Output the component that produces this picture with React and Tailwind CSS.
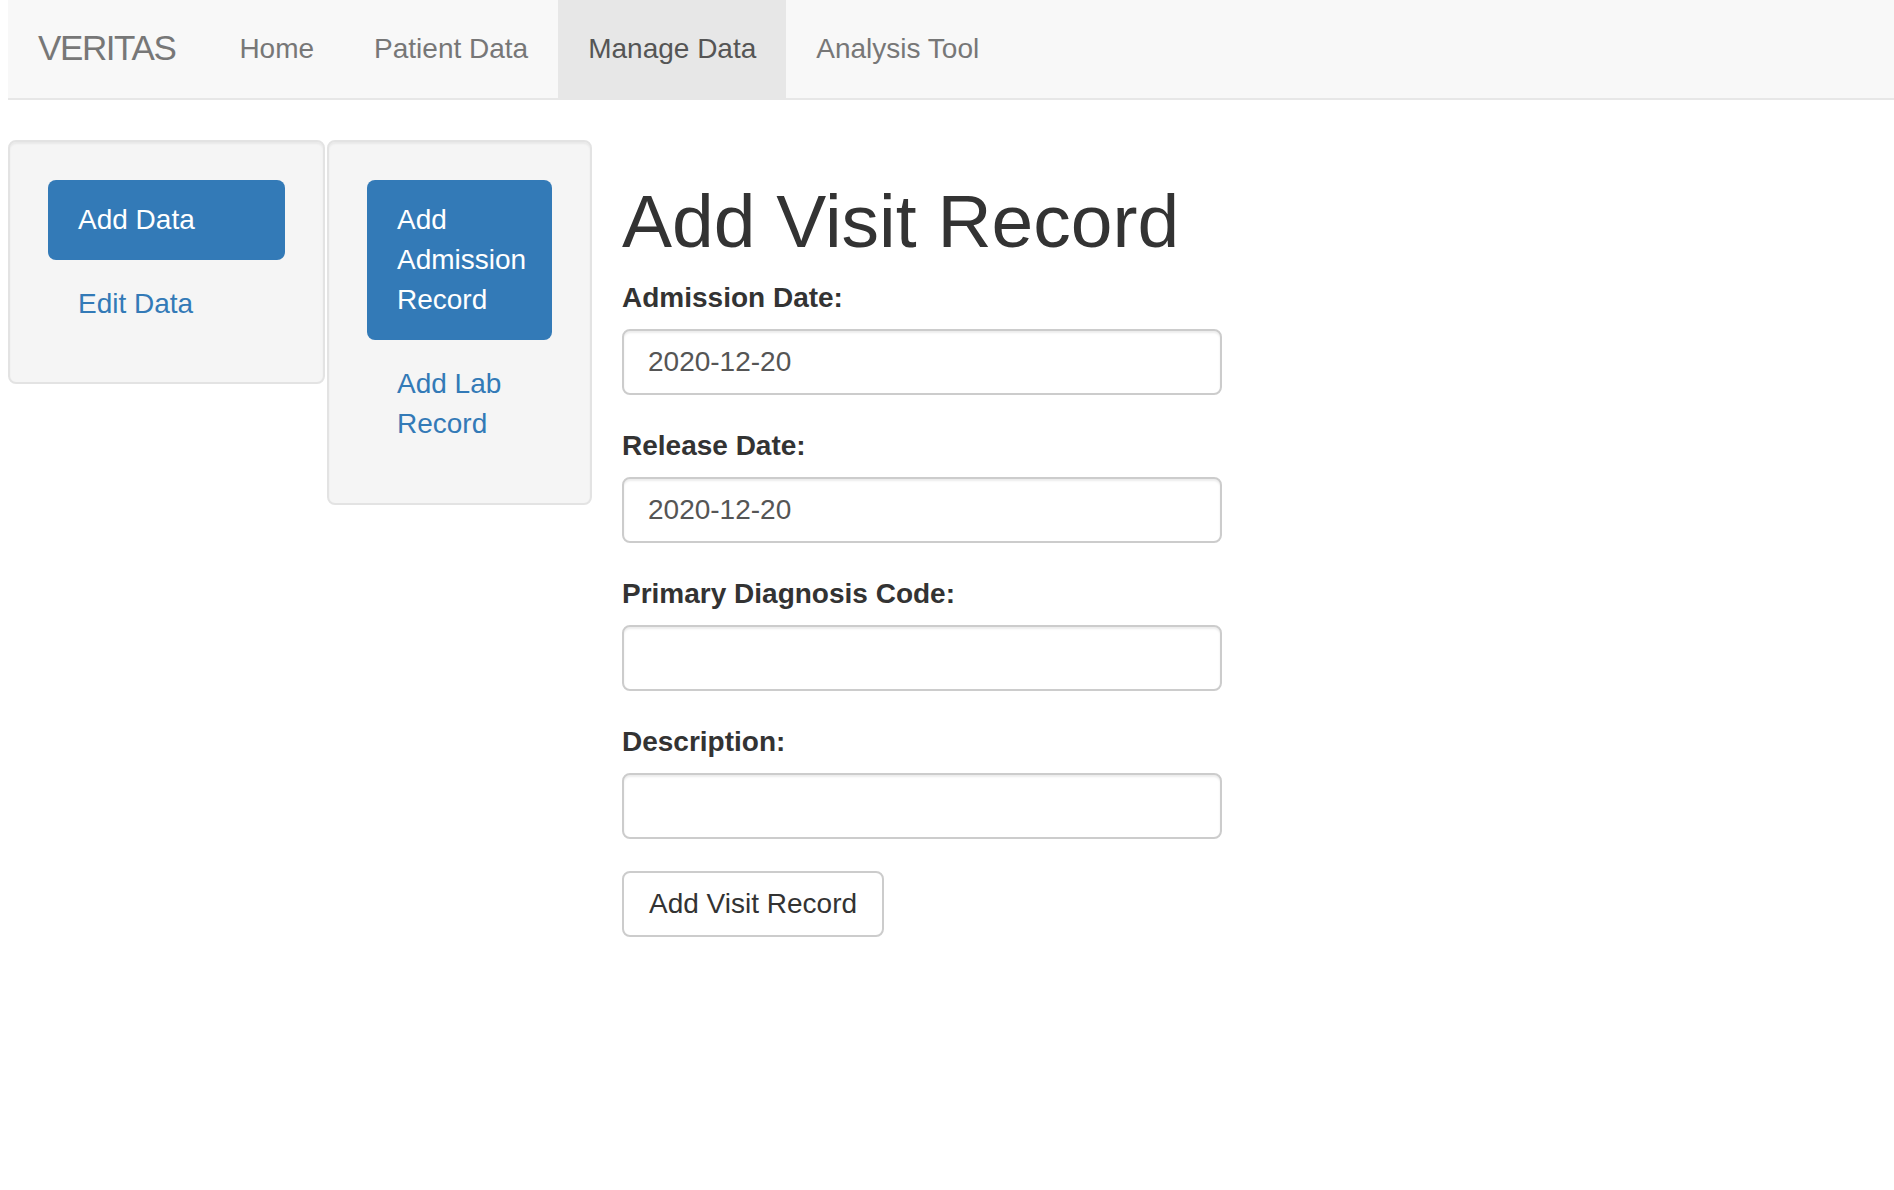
import React from "react";

const navLinks = [
  { label: "Home", active: false },
  { label: "Patient Data", active: false },
  { label: "Manage Data", active: true },
  { label: "Analysis Tool", active: false },
];

function Field({ label, value }) {
  return (
    <div className="mb-[31px]">
      <label className="mb-[11px] block text-[28px] font-bold leading-[40px] text-[#333]">{label}</label>
      <input
        type="text"
        defaultValue={value}
        className="block h-[66px] w-[600px] rounded-[8px] border-2 border-[#ccc] bg-white px-[24px] text-[28px] text-[#555] shadow-[inset_0_2px_2px_rgba(0,0,0,0.075)] outline-none"
      />
    </div>
  );
}

export default function App() {
  return (
    <div className="min-h-screen bg-white pl-[8px] font-['Liberation_Sans',Arial,sans-serif]">
      <nav className="flex h-[100px] border-b-2 border-[#e7e7e7] bg-[#f8f8f8]">
        <a className="block pl-[30px] pr-[34px] pt-[28px] text-[35px] leading-[40px] tracking-[-1.4px] text-[#777]">
          VERITAS
        </a>
        {navLinks.map((l) => (
          <a
            key={l.label}
            className={
              l.active
                ? "block bg-[#e7e7e7] px-[30px] pt-[29px] text-[28px] leading-[40px] text-[#555]"
                : "block px-[30px] pt-[29px] text-[28px] leading-[40px] text-[#777]"
            }
          >
            {l.label}
          </a>
        ))}
      </nav>

      <div className="mt-[40px] flex items-start">
        <div className="w-[317px] rounded-[8px] border-2 border-[#e3e3e3] bg-[#f5f5f5] px-[38px] pb-[38px] pt-[38px] shadow-[inset_0_2px_2px_rgba(0,0,0,0.05)]">
          <div className="flex flex-col gap-[4px]">
            <a className="block rounded-[8px] bg-[#337ab7] px-[30px] py-[20px] text-[28px] leading-[40px] text-white">
              Add Data
            </a>
            <a className="block rounded-[8px] px-[30px] py-[20px] text-[28px] leading-[40px] text-[#337ab7]">
              Edit Data
            </a>
          </div>
        </div>

        <div className="ml-[2px] w-[265px] rounded-[8px] border-2 border-[#e3e3e3] bg-[#f5f5f5] px-[38px] pb-[39px] pt-[38px] shadow-[inset_0_2px_2px_rgba(0,0,0,0.05)]">
          <div className="flex flex-col gap-[4px]">
            <a className="block rounded-[8px] bg-[#337ab7] px-[30px] py-[20px] text-[28px] leading-[40px] text-white">
              Add Admission Record
            </a>
            <a className="block rounded-[8px] px-[30px] py-[20px] text-[28px] leading-[40px] text-[#337ab7]">
              Add Lab Record
            </a>
          </div>
        </div>

        <div className="ml-[30px] w-[600px]">
          <h1 className="mb-[17px] mt-[41px] text-[75px] font-medium leading-[80px] text-[#333]">Add Visit Record</h1>
          <Field label="Admission Date:" value="2020-12-20" />
          <Field label="Release Date:" value="2020-12-20" />
          <Field label="Primary Diagnosis Code:" value="" />
          <Field label="Description:" value="" />
          <button className="mt-[1px] h-[66px] rounded-[8px] border-2 border-[#ccc] bg-white px-[25px] text-[28px] text-[#333]">
            Add Visit Record
          </button>
        </div>
      </div>
    </div>
  );
}
